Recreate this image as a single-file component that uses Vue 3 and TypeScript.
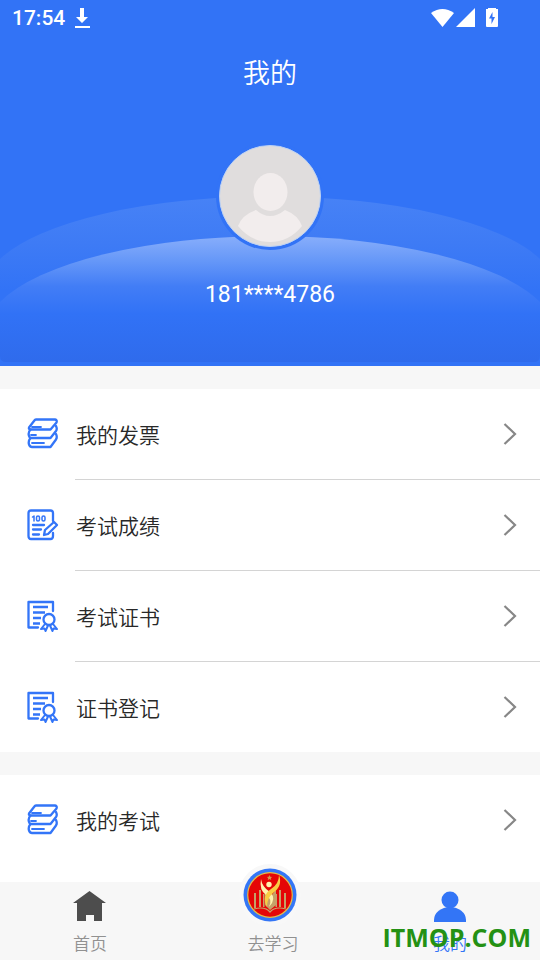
<script setup lang="ts">
import { ref } from 'vue'

type IconName = 'books' | 'score' | 'certificate'

interface MenuItem {
  label: string
  icon: IconName
}

const groups: MenuItem[][] = [
  [
    { label: '我的发票', icon: 'books' },
    { label: '考试成绩', icon: 'score' },
    { label: '考试证书', icon: 'certificate' },
    { label: '证书登记', icon: 'certificate' },
  ],
  [{ label: '我的考试', icon: 'books' }],
]

const phone = ref('181****4786')
</script>

<template>
  <div class="screen">
    <header class="hero">
      <svg class="hero-art" viewBox="0 0 540 366" preserveAspectRatio="none" aria-hidden="true">
        <defs>
          <linearGradient id="outerFill" gradientUnits="userSpaceOnUse" x1="0" y1="196" x2="0" y2="290">
            <stop offset="0" stop-color="#4782f6" />
            <stop offset="0.5" stop-color="#3e7bf5" />
            <stop offset="1" stop-color="#3273f6" />
          </linearGradient>
          <linearGradient id="innerFill" gradientUnits="userSpaceOnUse" x1="0" y1="236" x2="0" y2="362">
            <stop offset="0" stop-color="#88aefb" />
            <stop offset="0.2" stop-color="#6597f8" />
            <stop offset="0.4" stop-color="#427df6" />
            <stop offset="0.62" stop-color="#3172f6" />
            <stop offset="1" stop-color="#2f6bec" />
          </linearGradient>
        </defs>
        <path d="M0 259A285 92 0 0 1 540 259V362H0Z" fill="url(#outerFill)" />
        <path d="M0 302A285 97 0 0 1 540 302V356Q540 362 534 362H6Q0 362 0 356Z" fill="url(#innerFill)" />
      </svg>

      <div class="status">
        <div class="status-left">
          <span class="clock">17:54</span>
          <svg width="16" height="22" viewBox="0 0 16 22" fill="#fff" aria-hidden="true">
            <path d="M6 1h4v9h4l-6 6-6-6h4z" />
            <path d="M1 19h15v2H1z" />
          </svg>
        </div>
        <svg width="68" height="20" viewBox="0 0 68 20" fill="#fff" aria-hidden="true">
          <path d="M0 5Q11.500-3 23 5L11.500 19Z" />
          <path d="M44 0V19H25Z" />
          <path
            fill-rule="evenodd"
            d="M57 0h8v1h2v17q0 1-1 1H56q-1 0-1-1V1h2zM61.500 4L58 10.500h2.500V16L64 9h-2.500z"
          />
        </svg>
      </div>

      <h1 class="title">我的</h1>

      <svg class="avatar" width="108" height="108" viewBox="0 0 108 108" role="img" aria-label="头像">
        <circle cx="54" cy="54" r="54" fill="#3273f6" />
        <circle cx="54" cy="54" r="50.500" fill="#e0dddd" stroke="#bdd2f4" stroke-width="1" />
        <ellipse cx="54.500" cy="50" rx="17" ry="19" fill="#f2eded" />
        <path
          d="M40 68Q54 80 69 68Q82 73 86 84Q73 100 54 100Q35 100 22 84Q26 73 40 68Z"
          fill="#f2eded"
        />
      </svg>
      <p class="phone">{{ phone }}</p>
    </header>

    <main class="content">
      <ul v-for="(group, index) in groups" :key="index" class="group">
        <li v-for="item in group" :key="item.label" class="item">
          <button type="button" class="row">
            <svg
              class="row-icon"
              width="32"
              height="32"
              viewBox="0 0 32 32"
              fill="none"
              stroke="#3375f8"
              stroke-width="2.300"
              stroke-linecap="round"
              stroke-linejoin="round"
              aria-hidden="true"
            >
              <g v-if="item.icon === 'books'">
                <path d="M9 1.500H28Q30.500 2 29.500 4.500L23.500 11.500H3Q1.500 11 2 9.500L7 3Q8 1.500 9 1.500Z" />
                <path d="M3.500 11.500Q0 15.500 3 20H23.500L29 13Q30.500 11 29 8" />
                <path d="M3.500 20Q1 23 2 26.500Q3 29 5 29H23.500L29 21.500Q30.500 19 29 16" />
                <path d="M5 9H14M4 17H9M5 25H17" stroke-width="1.800" />
              </g>
              <g v-else-if="item.icon === 'score'">
                <path d="M26 12V4Q26 1.500 23.500 1.500H4Q1.500 1.500 1.500 4V27Q1.500 30 4 30H23.500Q26 30 26 27V24" />
                <path d="M6 16H17M6 20.500H14M6 25.500H12" />
                <path d="M18 21L27 13L30 16L21 25L17 26Z" />
                <path d="M5.500 8L7 7V12" stroke-width="1.500" />
                <rect x="9.500" y="7" width="3" height="5" rx="1.500" stroke-width="1.500" />
                <rect x="15" y="7" width="3" height="5" rx="1.500" stroke-width="1.500" />
              </g>
              <g v-else>
                <path d="M26 11V2H1.500V27.500H11" />
                <path d="M6 7H21M6 12.500H18M6 18H14M6 23.500H13" stroke-linecap="butt" />
                <circle cx="22" cy="19.500" r="5.500" />
                <path d="M18 24L14 29L17.500 28.500L18.500 31L21 25.500M26 24L30 29L26.500 28.500L25.500 31L23 25.500" stroke-width="2" />
              </g>
            </svg>
            <span class="row-label">{{ item.label }}</span>
            <svg width="14" height="22" viewBox="0 0 14 22" fill="none" stroke="#878787" stroke-width="2.200" aria-hidden="true">
              <path d="M1.500 1L12 11L1.500 21" />
            </svg>
          </button>
        </li>
      </ul>
    </main>

    <nav class="tabs">
      <a class="tab" href="#home">
        <svg width="34" height="32" viewBox="0 0 34 32" fill="#4d4d4d" aria-hidden="true">
          <path d="M16.500 1L33 13H29V31H21V25H13V31H4V13H0Z" />
        </svg>
        <span>首页</span>
      </a>
      <a class="tab tab-study" href="#study">
        <svg class="emblem" width="62" height="62" viewBox="0 0 62 62" aria-hidden="true">
          <circle cx="31" cy="31" r="31" fill="#f8f8f8" />
          <circle cx="31" cy="31" r="26.500" fill="#3476f6" />
          <circle cx="31" cy="31" r="22.300" fill="#e50606" stroke="#e6bd45" stroke-width="1.200" />
          <g fill="#c5a168">
            <path d="M15 29h2v15h-2zM20 26h2v17h-2zM24 30h1.500v13H24zM36.500 30H38v13h-1.500zM40 26h2v17h-2zM45 29h2v15h-2z" />
            <path d="M26 26L31 33L37 26V41L31 46L26 41Z" />
          </g>
          <path d="M15 45Q26 42 31 48Q36 42 47 45" fill="none" stroke="#c5a168" stroke-width="1.200" />
          <path d="M22 15Q20 26 27 31Q34 35 30 43Q38 35 31 28Q23 23 22 15Z" fill="#fff2ae" />
          <path d="M40 11Q40 20 32 25Q22 32 28 43Q28 34 34 29Q44 22 40 11Z" fill="#f8cd43" />
          <circle cx="30" cy="20.500" r="2.700" fill="#fff2ae" />
          <path d="M30.500 11l.8 1.700 1.900.2-1.400 1.200.4 1.900-1.700-1-1.700 1 .4-1.900-1.400-1.200 1.900-.2z" fill="#d49a4b" />
        </svg>
        <span>去学习</span>
      </a>
      <a class="tab tab-active" href="#mine" aria-current="page">
        <svg width="34" height="32" viewBox="0 0 34 32" fill="#3375f6" aria-hidden="true">
          <circle cx="17" cy="10" r="8.500" />
          <path d="M1 32V30A16 13 0 0 1 33 30V32Z" />
        </svg>
        <span>我的</span>
      </a>
      <span class="watermark">ITMOP.COM</span>
    </nav>
  </div>
</template>

<style>
body {
  margin: 0;
}
</style>

<style scoped>
.screen {
  display: flex;
  flex-direction: column;
  min-height: 100vh;
  background: #f7f7f7;
  color: #282828;
  font-family: Roboto, "Noto Sans CJK SC", sans-serif;
}

.hero {
  position: relative;
  display: flex;
  flex-direction: column;
  align-items: center;
  box-sizing: border-box;
  padding-bottom: 55px;
  background: #3273f6;
  color: #fff;
}

.hero-art {
  position: absolute;
  inset: 0;
  width: 100%;
  height: 100%;
}

.status,
.title,
.avatar,
.phone {
  position: relative;
}

.status {
  display: flex;
  align-items: center;
  justify-content: space-between;
  align-self: stretch;
  height: 36px;
  padding: 0 41px 0 12px;
}

.status-left {
  display: flex;
  align-items: center;
  gap: 9px;
}

.clock {
  font-size: 21px;
  font-weight: 500;
}

.title {
  margin: 18px 0 48px;
  font-size: 27px;
  font-weight: 350;
  line-height: 40px;
}

.avatar {
  display: block;
}

.phone {
  margin: 29px 0 0;
  font-size: 23px;
  line-height: 32px;
}

.content {
  display: flex;
  flex: 1;
  flex-direction: column;
  gap: 23px;
  padding-top: 23px;
}

.group {
  margin: 0;
  padding: 0;
  background: #fff;
  list-style: none;
}

.group:last-child {
  flex: 1;
}

.item + .item::before {
  display: block;
  height: 1px;
  margin-left: 75px;
  background: #d4d4d4;
  content: "";
}

.row {
  display: flex;
  align-items: center;
  width: 100%;
  height: 90px;
  padding: 0 23px 0 27px;
  border: 0;
  background: none;
  color: inherit;
  font: inherit;
  text-align: left;
}

.row-label {
  flex: 1;
  padding: 4px 0 0 17px;
  font-size: 21px;
  font-weight: 350;
  line-height: 30px;
}

.tabs {
  position: relative;
  display: flex;
  background: #f7f7f7;
}

.tab {
  display: flex;
  flex: 1;
  flex-direction: column;
  align-items: center;
  gap: 9px;
  box-sizing: border-box;
  height: 78px;
  padding-top: 8px;
  color: #919191;
  font-size: 17px;
  font-weight: 350;
  line-height: 26px;
  text-decoration: none;
}

.tab-study {
  justify-content: flex-end;
  gap: 5px;
  padding: 0 0 3px;
}

.tab-study span {
  padding-left: 6px;
}

.emblem {
  flex: none;
}

.tab-active {
  color: #3375f6;
}

.watermark {
  position: absolute;
  right: 9px;
  bottom: 7px;
  color: #249114;
  font-family: "Open Sans", sans-serif;
  font-size: 25px;
  font-weight: 700;
  line-height: 32px;
  pointer-events: none;
}
</style>
